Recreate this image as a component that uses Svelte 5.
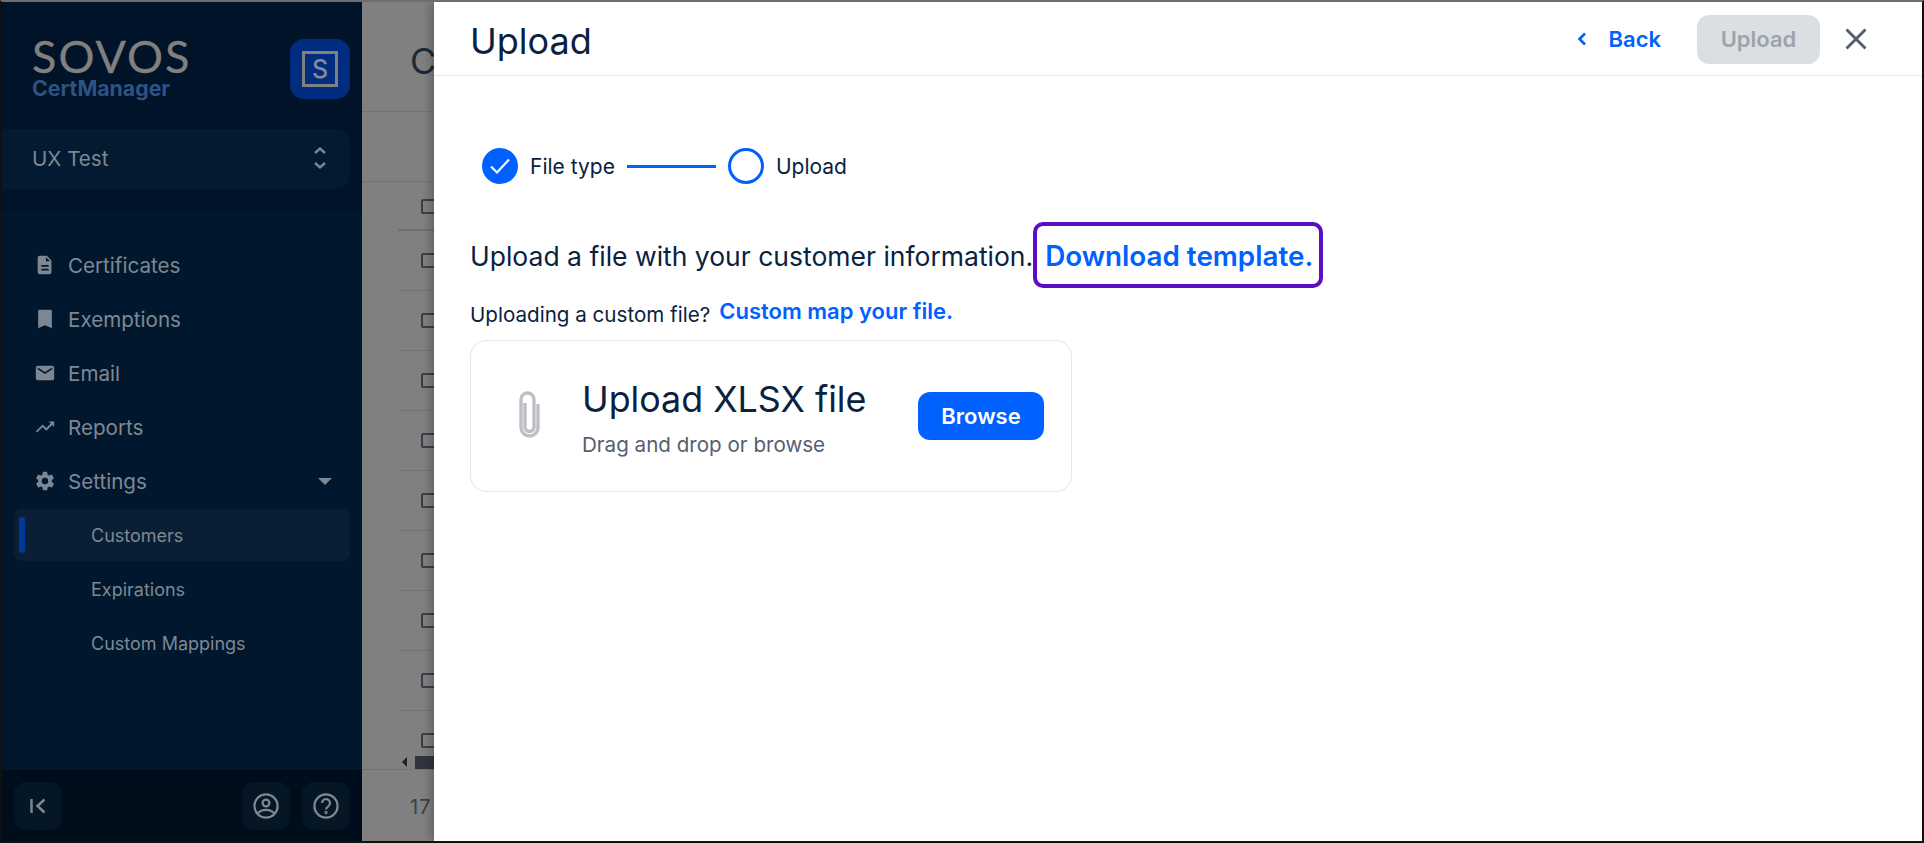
<script lang="ts">
  const navItems = [
    { label: 'Certificates', icon: 'M6 2h8l5 5v13a2 2 0 0 1-2 2H6a2 2 0 0 1-2-2V4a2 2 0 0 1 2-2zm7 1.5V8h4.5zM8 12v2h8v-2zm0 4v2h8v-2z' },
    { label: 'Exemptions', icon: 'M6 2h12a1.500 1.500 0 0 1 1.500 1.500V22L12 18.800 4.500 22V3.500A1.500 1.500 0 0 1 6 2z' },
    { label: 'Email', icon: 'M4 4h16a2 2 0 0 1 2 2v12a2 2 0 0 1-2 2H4a2 2 0 0 1-2-2V6a2 2 0 0 1 2-2zm8 9 8-5V6l-8 5-8-5v2z' },
    { label: 'Reports', icon: 'M16 6l2.300 2.300-4.900 4.900-4-4L2 16.600 3.400 18l6-6 4 4 6.300-6.300L22 12V6z' },
    { label: 'Settings', icon: 'M19.400 13c.04-.33.1-.66.1-1s-.06-.67-.1-1l2.100-1.650c.2-.15.25-.42.12-.64l-2-3.460c-.12-.22-.39-.3-.61-.22l-2.490 1c-.52-.4-1.080-.73-1.690-.98l-.38-2.650A.5.5 0 0 0 14 2h-4a.5.5 0 0 0-.5.420l-.38 2.650c-.61.25-1.170.59-1.690.98l-2.490-1c-.23-.09-.49 0-.61.22l-2 3.460c-.13.22-.07.49.12.640L4.600 11c-.04.33-.1.66-.1 1s.06.67.1 1l-2.100 1.650c-.2.15-.25.42-.12.64l2 3.460c.12.22.39.3.61.22l2.490-1c.52.4 1.080.73 1.690.98l.38 2.650c.03.24.24.42.5.42h4c.25 0 .46-.18.5-.42l.38-2.650c.61-.25 1.170-.59 1.690-.98l2.490 1c.23.09.49 0 .61-.22l2-3.460c.13-.22.07-.49-.12-.64zM12 15.500a3.500 3.500 0 1 1 0-7 3.500 3.500 0 0 1 0 7z' }
  ];
  const subItems = ['Customers', 'Expirations', 'Custom Mappings'];
  const rowCount = 10;
</script>

<div class="frame">
  <aside class="sidebar">
    <div class="side-top">
      <div class="brand">
        <div class="logo">
          <div class="sovos">SOVOS</div>
          <div class="cert">CertManager</div>
        </div>
        <div class="badge"><span>S</span></div>
      </div>
      <div class="tenant">
        <span>UX Test</span>
        <svg width="16" height="26" viewBox="0 0 16 26" fill="none" stroke="#7f8892" stroke-width="2.400">
          <path d="M3 8l5-4.500L13 8M3 18l5 4.500L13 18" />
        </svg>
      </div>
    </div>

    <nav class="nav">
      {#each navItems as item}
        <div class="nav-item">
          <svg class="nav-icon" viewBox="0 0 24 24" fill="#7d8794" fill-rule="evenodd"><path d={item.icon} /></svg>
          <span>{item.label}</span>
          {#if item.label === 'Settings'}
            <i class="caret"></i>
          {/if}
        </div>
      {/each}
      {#each subItems as sub, i}
        <div class="sub-item" class:active={i === 0}>{sub}</div>
      {/each}
    </nav>

    <div class="side-foot">
      <button class="foot-btn" aria-label="Collapse">
        <svg width="20" height="20" viewBox="0 0 20 20" fill="none" stroke="#7f8892" stroke-width="2.400">
          <path d="M3.500 3v14M16.500 3.500 9.500 10l7 6.500" />
        </svg>
      </button>
      <div class="foot-right">
        <button class="foot-btn" aria-label="Profile">
          <svg width="28" height="28" viewBox="0 0 28 28" fill="none" stroke="#7f8892" stroke-width="2.200">
            <circle cx="14" cy="14" r="11.600" />
            <circle cx="14" cy="11" r="3.400" />
            <path d="M5.500 21.500c2.500-2.700 5.500-3.600 8.500-3.600s6 .9 8.500 3.600" />
          </svg>
        </button>
        <button class="foot-btn" aria-label="Help">
          <svg width="28" height="28" viewBox="0 0 28 28" fill="none" stroke="#7f8892" stroke-width="2.200">
            <circle cx="14" cy="14" r="11.600" />
            <path d="M10 11a4 4 0 1 1 6.300 3.300c-1.500 1-2.300 1.800-2.300 3.200" />
            <circle cx="14" cy="20.500" r="0.600" />
          </svg>
        </button>
      </div>
    </div>
  </aside>

  <div class="under">
    <div class="under-head"><span>Customers</span></div>
    <div class="under-filter"></div>
    <div class="under-rows">
      {#each Array(rowCount) as _, i}
        <div class="under-row" class:first={i === 0}><i class="check"></i></div>
      {/each}
    </div>
    <div class="under-scroll"><i class="arrow"></i><i class="thumb"></i></div>
    <div class="under-foot">17 customers</div>
  </div>

  <section class="panel">
    <header class="panel-head">
      <h1>Upload</h1>
      <div class="head-actions">
        <button class="back">
          <svg width="12" height="16" viewBox="0 0 12 16" fill="none" stroke="#0061ff" stroke-width="2.600"><path d="M9 2.500 3.500 8 9 13.500" /></svg>
          Back
        </button>
        <button class="upload-btn" disabled>Upload</button>
        <button class="close" aria-label="Close">
          <svg width="22" height="22" viewBox="0 0 22 22" fill="none" stroke="#565e70" stroke-width="3"><path d="M1.500 1.500l19 19M20.500 1.500l-19 19" /></svg>
        </button>
      </div>
    </header>

    <div class="panel-body">
      <div class="stepper">
        <span class="step-dot done">
          <svg width="24" height="24" viewBox="0 0 24 24" fill="none" stroke="#fff" stroke-width="2.200"><path d="M3 12.500l6 6L21 5.500" /></svg>
        </span>
        <span class="step-label">File type</span>
        <i class="step-line"></i>
        <span class="step-dot"></span>
        <span class="step-label">Upload</span>
      </div>

      <div class="intro">
        <span>Upload a file with your customer information.</span>
        <a class="download" href="#template">Download template.</a>
      </div>

      <div class="custom">
        <span>Uploading a custom file?</span>
        <a href="#map">Custom map your file.</a>
      </div>

      <div class="card">
        <svg class="clip" width="26" height="50" viewBox="0 0 26 50" fill="none" stroke="#bcc0c4" stroke-width="3.400">
          <path d="M9 12v24a4.500 4.500 0 0 0 9 0V8.500a6.500 6.500 0 0 0-13 0v28a8.500 8.500 0 0 0 17 0V13" />
        </svg>
        <div class="card-text">
          <div class="card-title">Upload XLSX file</div>
          <div class="card-sub">Drag and drop or browse</div>
        </div>
        <button class="browse">Browse</button>
      </div>
    </div>
  </section>
</div>

<style>
  :global(body) {
    margin: 0;
    background: #fff;
  }

  * {
    box-sizing: border-box;
  }

  .frame {
    display: flex;
    width: 1924px;
    height: 843px;
    border: 2px solid #111;
    border-top-color: #6e6e6e;
    overflow: hidden;
    font-family: Inter, 'Liberation Sans', sans-serif;
    color: #0a2240;
  }

  /* dimmed nav rail behind the drawer */
  .sidebar {
    flex: 0 0 360px;
    display: flex;
    flex-direction: column;
    background: #01172d;
    color: #7f8892;
  }

  .side-top {
    height: 211px;
    padding: 37px 12px 0 0;
    background: #001328;
  }

  .brand {
    display: flex;
    justify-content: space-between;
    height: 60px;
    padding-left: 30px;
  }

  .sovos {
    font-family: Lato, sans-serif;
    font-size: 45px;
    line-height: 34px;
    letter-spacing: 2px;
    color: #808080;
    -webkit-text-stroke: 0.3px #808080;
  }

  .cert {
    margin-top: 3px;
    font-size: 21.300px;
    line-height: 24px;
    font-weight: 700;
    color: #2c5482;
  }

  .badge {
    display: flex;
    align-items: center;
    justify-content: center;
    width: 60px;
    height: 60px;
    border-radius: 14px;
    background: #002d7f;
  }

  .badge span {
    display: flex;
    align-items: center;
    justify-content: center;
    width: 36px;
    height: 36px;
    border: 3.500px solid #808080;
    color: #808b9c;
    font-size: 25px;
    font-weight: 500;
  }

  .tenant {
    display: flex;
    align-items: center;
    justify-content: space-between;
    height: 60px;
    margin-top: 30px;
    padding: 0 22px 2px 30px;
    border-radius: 0 14px 14px 0;
    background: #041a30;
    font-size: 20.600px;
  }

  .nav {
    flex: 1;
    padding: 25px 12px 0;
  }

  .nav-item {
    display: flex;
    align-items: center;
    gap: 12px;
    height: 54px;
    padding: 0 18px 0 20px;
    font-size: 20.600px;
    color: #7f8892;
  }

  .nav-icon {
    width: 22px;
    height: 22px;
  }

  .caret {
    margin-left: auto;
    border: 7px solid transparent;
    border-top: 7px solid #7f8892;
    border-bottom: 0;
  }

  .sub-item {
    position: relative;
    display: flex;
    align-items: center;
    height: 54px;
    padding-left: 77px;
    font-size: 18px;
    color: #7f8892;
  }

  .sub-item.active {
    height: 52px;
    margin: 1px 0;
    border-radius: 8px;
    background: #0a1e35;
  }

  .sub-item.active::before {
    content: '';
    position: absolute;
    left: 5px;
    top: 8px;
    bottom: 8px;
    width: 6px;
    border-radius: 3px;
    background: #003a99;
  }

  .side-foot {
    display: flex;
    justify-content: space-between;
    height: 71px;
    padding: 12px 12px 0;
    background: #000e1c;
  }

  .foot-right {
    display: flex;
    gap: 12px;
  }

  .foot-btn {
    display: flex;
    align-items: center;
    justify-content: center;
    width: 48px;
    height: 48px;
    padding: 0;
    border: 0;
    border-radius: 12px;
    background: #051625;
  }

  /* page underneath, only a sliver shows */
  .under {
    flex: 0 0 72px;
    display: flex;
    flex-direction: column;
    overflow: hidden;
    background: #808080;
    color: #1d2838;
  }

  .under-head {
    flex: 0 0 110px;
    padding: 39px 0 0 48px;
    border-bottom: 1px solid #737373;
    font-size: 36px;
    line-height: 40px;
    white-space: nowrap;
  }

  .under-filter {
    flex: 0 0 70px;
    border-bottom: 1px solid #737373;
  }

  .under-rows {
    flex: 0 0 573px;
    overflow: hidden;
    padding-left: 36px;
  }

  .under-row {
    height: 60px;
    padding: 22px 0 0 23px;
    border-bottom: 1px solid #737373;
  }

  .under-row.first {
    height: 49px;
    padding-top: 17px;
    border-bottom: 2px solid #707070;
  }

  .check {
    display: block;
    width: 20px;
    height: 15px;
    border: 2px solid #3a3f47;
    border-radius: 2px;
  }

  .under-scroll {
    flex: 0 0 14px;
    display: flex;
    align-items: center;
    gap: 8px;
    padding-left: 40px;
  }

  .arrow {
    border: 5px solid transparent;
    border-right: 5px solid #222;
    border-left: 0;
  }

  .thumb {
    width: 40px;
    height: 13px;
    background: #30343c;
  }

  .under-foot {
    flex: 1;
    padding: 25px 0 0 48px;
    border-top: 1px solid #737373;
    font-size: 20px;
    letter-spacing: 1px;
    white-space: nowrap;
    color: #3a404a;
  }

  .panel {
    position: relative;
    flex: 1;
    display: flex;
    flex-direction: column;
    background: #fff;
    box-shadow: -2px 0 10px rgba(0, 0, 0, 0.3);
  }

  .panel-head {
    display: flex;
    align-items: center;
    justify-content: space-between;
    height: 74px;
    padding: 2px 55px 0 36px;
    border-bottom: 1px solid #e3e5e8;
  }

  h1 {
    margin: 2px 0 0;
    font-size: 36px;
    font-weight: 400;
  }

  .head-actions {
    display: flex;
    align-items: center;
  }

  button {
    font-family: inherit;
  }

  .back {
    display: flex;
    align-items: center;
    gap: 21px;
    margin-bottom: 2px;
    padding: 0;
    border: 0;
    background: none;
    color: #0061ff;
    font-size: 22px;
    font-weight: 600;
  }

  .upload-btn {
    width: 123px;
    height: 49px;
    margin-left: 36px;
    padding: 0 0 2px;
    border: 0;
    border-radius: 12px;
    background: #dbdfe3;
    color: #9da3ab;
    font-size: 22px;
    font-weight: 600;
  }

  .close {
    display: flex;
    margin: 0 0 2px 25px;
    padding: 0;
    border: 0;
    background: none;
  }

  .panel-body {
    padding: 70px 36px 0;
  }

  .stepper {
    display: flex;
    align-items: center;
    height: 40px;
    padding-left: 12px;
    font-size: 21px;
  }

  .step-dot {
    display: flex;
    align-items: center;
    justify-content: center;
    width: 36px;
    height: 36px;
    border: 3px solid #0061ff;
    border-radius: 50%;
  }

  .step-dot.done {
    background: #0061ff;
  }

  .step-label {
    margin-left: 12px;
  }

  .step-line {
    width: 89px;
    height: 3px;
    margin: 0 12px;
    background: #0061ff;
  }

  .intro {
    display: flex;
    align-items: center;
    margin-top: 36px;
    font-size: 26.500px;
  }

  .intro span {
    padding-top: 2px;
  }

  .download {
    margin-left: 0;
    padding: 11px 6px 9px 8px;
    border: 4px solid #5b0ec2;
    border-radius: 10px;
    color: #0061ff;
    font-size: 27.800px;
    font-weight: 600;
    line-height: 38px;
    text-decoration: none;
    white-space: nowrap;
  }

  .custom {
    display: flex;
    align-items: flex-start;
    gap: 9px;
    margin-top: 12px;
    font-size: 20.600px;
    line-height: 30px;
  }

  .custom a {
    position: relative;
    top: -4px;
    color: #0061ff;
    font-size: 22px;
    font-weight: 600;
    text-decoration: none;
  }

  .card {
    display: flex;
    align-items: center;
    width: 602px;
    height: 152px;
    margin-top: 10px;
    padding: 0 27px 0 45px;
    border: 1px solid #e3e5e8;
    border-radius: 16px;
  }

  .card-text {
    flex: 1;
    margin-left: 40px;
    padding-top: 4px;
  }

  .card-title {
    font-size: 35.800px;
    font-weight: 400;
    line-height: 44px;
  }

  .card-sub {
    margin-top: 10px;
    font-size: 20.600px;
    line-height: 28px;
    color: #565e70;
  }

  .browse {
    width: 126px;
    height: 48px;
    border: 0;
    border-radius: 12px;
    background: #0061ff;
    color: #fff;
    font-size: 22px;
    font-weight: 600;
  }
</style>
